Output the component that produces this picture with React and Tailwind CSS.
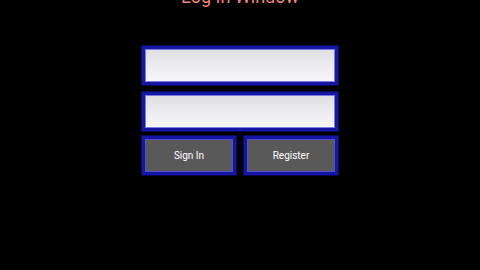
import React from "react";

export default function App() {
  const inputCls =
    "h-[39px] w-full border-[3px] border-[#1616a6] shadow-[inset_0_0_0_1px_#7a7ae0,0_0_0_1px_#0a0a50] bg-gradient-to-b from-[#dedee2] via-[#ececee] to-[#f7f7fa] outline-none px-2 text-[12px]";
  const btnCls =
    "h-[39px] flex-1 border-[3px] border-[#1616a6] shadow-[inset_0_0_0_1px_#5050c8,0_0_0_1px_#0a0a50] bg-[#595959] text-white text-[10px] flex items-center justify-center";
  return (
    <div
      className="w-[480px] h-[270px] bg-black flex flex-col items-center overflow-hidden"
      style={{ fontFamily: "Roboto, 'Liberation Sans', sans-serif" }}
    >
      <div className="mt-[-14px] h-[22px] text-[18px] leading-[22px] text-[#f08474]">
        Log In Window
      </div>
      <div className="mt-[38px] w-[196px] flex flex-col gap-[7px]">
        <input className={inputCls} />
        <input className={inputCls} />
        <div className="flex gap-[8px] mt-[-2px]">
          <button className={btnCls}>Sign In</button>
          <button className={btnCls}>Register</button>
        </div>
      </div>
    </div>
  );
}
